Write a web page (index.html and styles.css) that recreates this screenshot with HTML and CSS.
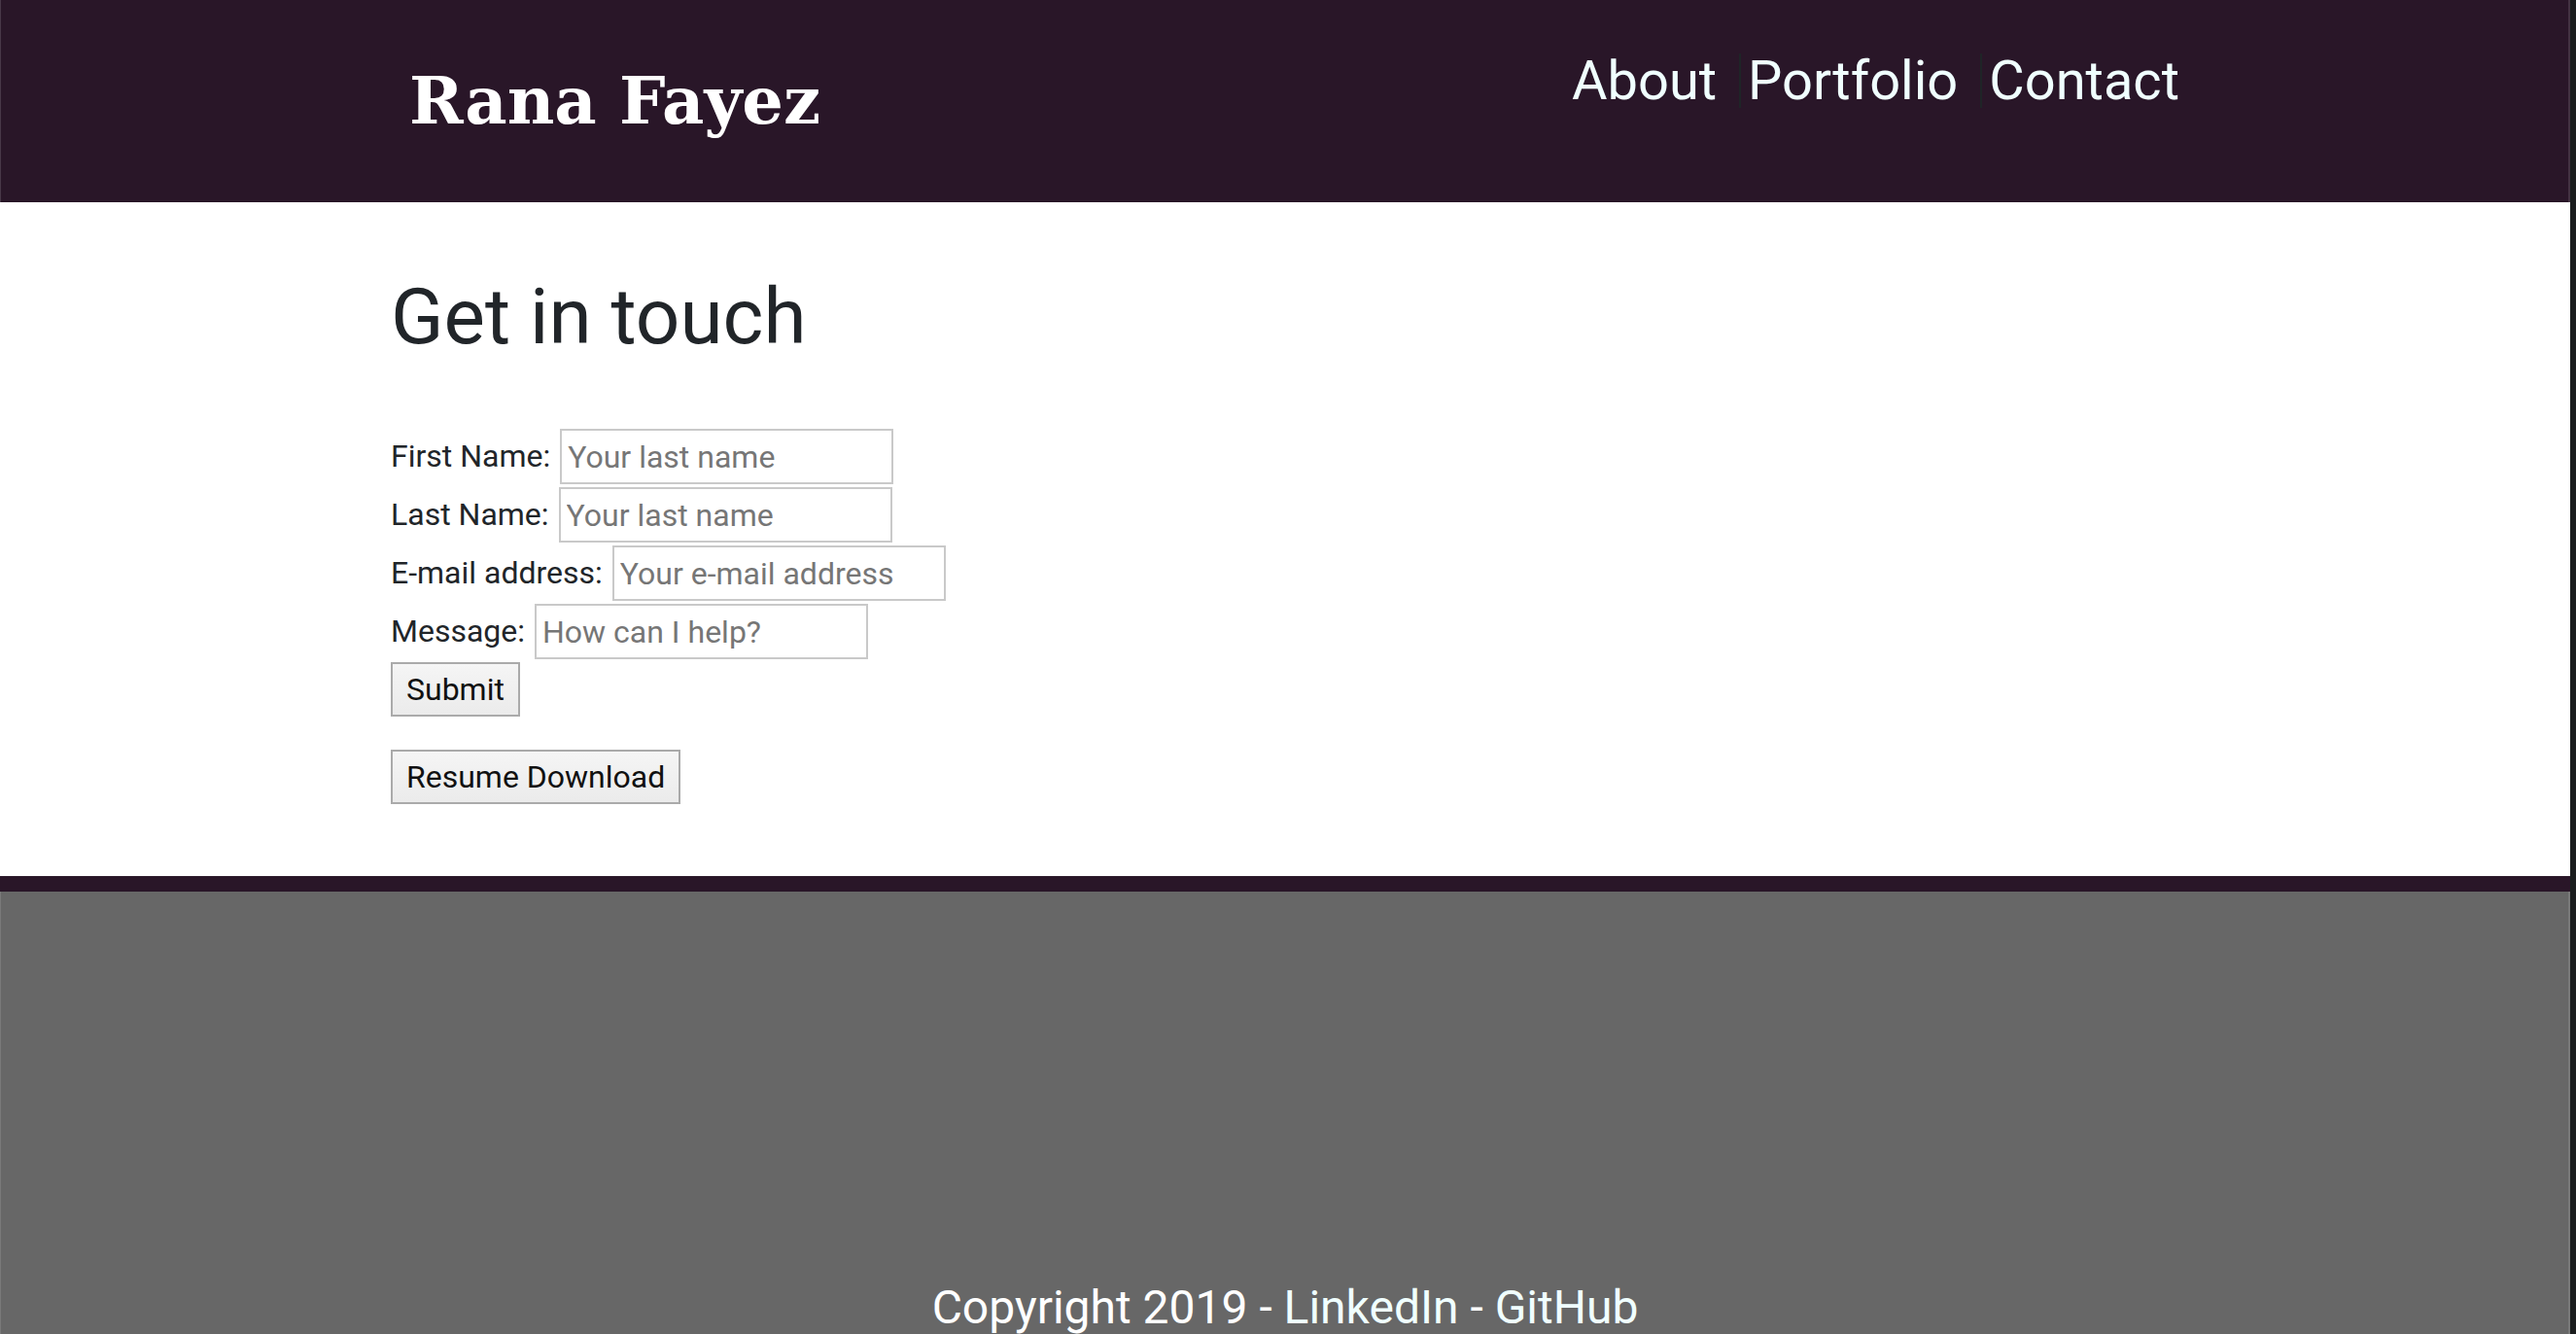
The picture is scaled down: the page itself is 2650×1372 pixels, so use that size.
FILE: index.html
```html
<!DOCTYPE html>
<html lang="en">
<head>
<meta charset="utf-8">
<title>Rana Fayez - Contact</title>
<link rel="stylesheet" href="styles.css">
</head>
<body>
<div class="screen">
  <div class="page">
    <header class="site-header">
      <div class="container header-inner">
        <div class="logo">Rana Fayez</div>
        <nav>
          <ul class="nav">
            <li class="nav-item"><a href="#">About</a></li>
            <li class="nav-item"><a href="#">Portfolio</a></li>
            <li class="nav-item"><a href="#">Contact</a></li>
          </ul>
        </nav>
      </div>
    </header>
    <main class="contact">
      <div class="container">
        <h1 class="title">Get in touch</h1>
        <form class="form">
          <div class="row"><label class="label">First Name:</label><input class="field" type="text" placeholder="Your last name"></div>
          <div class="row"><label class="label">Last Name:</label><input class="field" type="text" placeholder="Your last name"></div>
          <div class="row"><label class="label">E-mail address:</label><input class="field" type="text" placeholder="Your e-mail address"></div>
          <div class="row"><label class="label">Message:</label><input class="field" type="text" placeholder="How can I help?"></div>
          <button class="btn" type="button">Submit</button>
        </form>
        <button class="btn resume" type="button">Resume Download</button>
      </div>
    </main>
    <footer class="site-footer">
      <p class="copy">Copyright 2019 - <a href="#">LinkedIn</a> - <a href="#">GitHub</a></p>
    </footer>
  </div>
  <div class="edge"></div>
</div>
</body>
</html>
```
FILE: styles.css
```css
html, body {
  margin: 0;
  padding: 0;
  height: 100%;
  overflow: hidden;
}
body {
  font-family: Roboto, "Liberation Sans", sans-serif;
  color: #212529;
  background: #ffffff;
}
.screen {
  display: flex;
  height: 1372px;
  width: 2650px;
}
.page {
  width: 2644px;
  display: flex;
  flex-direction: column;
  background: #ffffff;
}
.edge {
  width: 6px;
  background: #1b1d1e;
}
.container {
  width: 1840px;
  margin: 0 auto;
}
.site-header {
  height: 208px;
  background: #291628;
  box-shadow: inset 1px 0 0 rgba(255,255,255,0.15), inset -2px 0 0 rgba(255,255,255,0.12);
  flex: none;
}
.header-inner {
  display: flex;
  justify-content: space-between;
  align-items: flex-start;
}
.logo {
  font-family: "DejaVu Serif", "Liberation Serif", serif;
  font-weight: bold;
  font-size: 67px;
  line-height: 1;
  color: #ffffff;
  padding-top: 70px;
  padding-left: 19px;
}
.nav {
  list-style: none;
  margin: 0;
  padding: 55px 0 0 0;
  display: flex;
}
.nav-item {
  font-size: 56px;
  line-height: 1;
}
.nav-item + .nav-item {
  margin-left: 23px;
  padding-left: 7px;
  border-left: 2px solid #1f2427;
}
.nav-item a {
  color: #f0ffff;
  text-decoration: none;
}
.contact {
  flex: none;
  padding-top: 70px;
  padding-bottom: 74px;
}
.title {
  font-size: 80px;
  font-weight: 400;
  line-height: 1.2;
  margin: 0 0 67px 0;
  color: #212529;
}
.form {
  margin: 0;
}
.row {
  display: flex;
  align-items: center;
  gap: 10px;
  margin-bottom: 3px;
}
.label {
  font-size: 32px;
  line-height: 1.2;
}
.field {
  box-sizing: border-box;
  width: 343px;
  height: 57px;
  padding: 0 6px;
  border: 2px solid #c9c9c9;
  font-family: Roboto, "Liberation Sans", sans-serif;
  font-size: 32px;
  color: #212529;
  background: #ffffff;
  outline: none;
}
.field::placeholder {
  color: #767676;
}
.btn {
  display: block;
  box-sizing: border-box;
  height: 56px;
  padding: 0 14px;
  border: 2px solid #aaaaaa;
  background: linear-gradient(#f5f5f5, #ebebeb);
  font-family: Roboto, "Liberation Sans", sans-serif;
  font-size: 32px;
  color: #111111;
  border-radius: 0;
}
.resume {
  margin-top: 34px;
}
.site-footer {
  flex: 1;
  background: #676767;
  border-top: 16px solid #291628;
  box-shadow: inset 1px 0 0 rgba(255,255,255,0.12), inset -2px 0 0 rgba(255,255,255,0.12);
  padding-top: 392px;
  text-align: center;
}
.copy {
  margin: 0;
  font-size: 48px;
  line-height: 1.5;
  color: #ffffff;
}
.copy a {
  color: #f0ffff;
  text-decoration: none;
}
```
